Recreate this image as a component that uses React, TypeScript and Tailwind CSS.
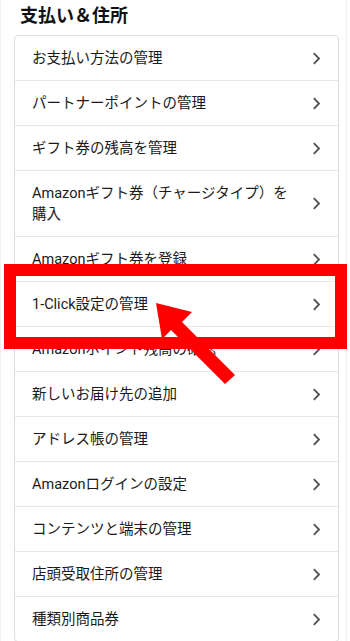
import React from "react";

const items = [
  "お支払い方法の管理",
  "パートナーポイントの管理",
  "ギフト券の残高を管理",
  "Amazonギフト券（チャージタイプ）を購入",
  "Amazonギフト券を登録",
  "1-Click設定の管理",
  "Amazonポイント残高の確認",
  "新しいお届け先の追加",
  "アドレス帳の管理",
  "Amazonログインの設定",
  "コンテンツと端末の管理",
  "店頭受取住所の管理",
  "種類別商品券",
];

function Chevron() {
  return (
    <svg width="9" height="13" viewBox="0 0 9 13" className="shrink-0">
      <path d="M1.8 1.2 L7 6.5 L1.8 11.8" fill="none" stroke="#555" strokeWidth="1.9" />
    </svg>
  );
}

export default function App() {
  return (
    <div
      className="relative h-[641px] w-[350px] overflow-hidden bg-white"
      style={{ fontFamily: "Roboto, 'Noto Sans CJK JP', sans-serif" }}
    >
      <div className="h-full w-[347px] border-x border-[#f1f1f1]">
        <h2 className="pl-[19px] pt-[4px] text-[18px] font-bold leading-[24px] text-[#111]">
          支払い＆住所
        </h2>

        <div className="ml-[13px] mt-[7px] w-[325px] rounded-[4px] border border-[#dddddd]">
          {items.map((item, index) => (
            <div
              key={item}
              className={
                index === 0
                  ? "flex items-center justify-between py-[11.5px] pl-[17px] pr-[17px]"
                  : "flex items-center justify-between border-t border-[#e7e7e7] py-[11.5px] pl-[17px] pr-[17px]"
              }
            >
              <span className="w-[265px] text-[14.5px] leading-[21px] text-[#1a1a1a]">{item}</span>
              <Chevron />
            </div>
          ))}
        </div>
      </div>

      {/* highlight box */}
      <div className="absolute left-[4px] top-[264px] h-[85px] w-[343px] border-[12px] border-[#ff0000]" />

      {/* arrow */}
      <svg className="absolute left-0 top-0" width="350" height="641" viewBox="0 0 350 641">
        <polygon
          points="156,303 192,312 182,322 235,375 225,384 171,330 162,339"
          fill="#ff0000"
        />
      </svg>
    </div>
  );
}
